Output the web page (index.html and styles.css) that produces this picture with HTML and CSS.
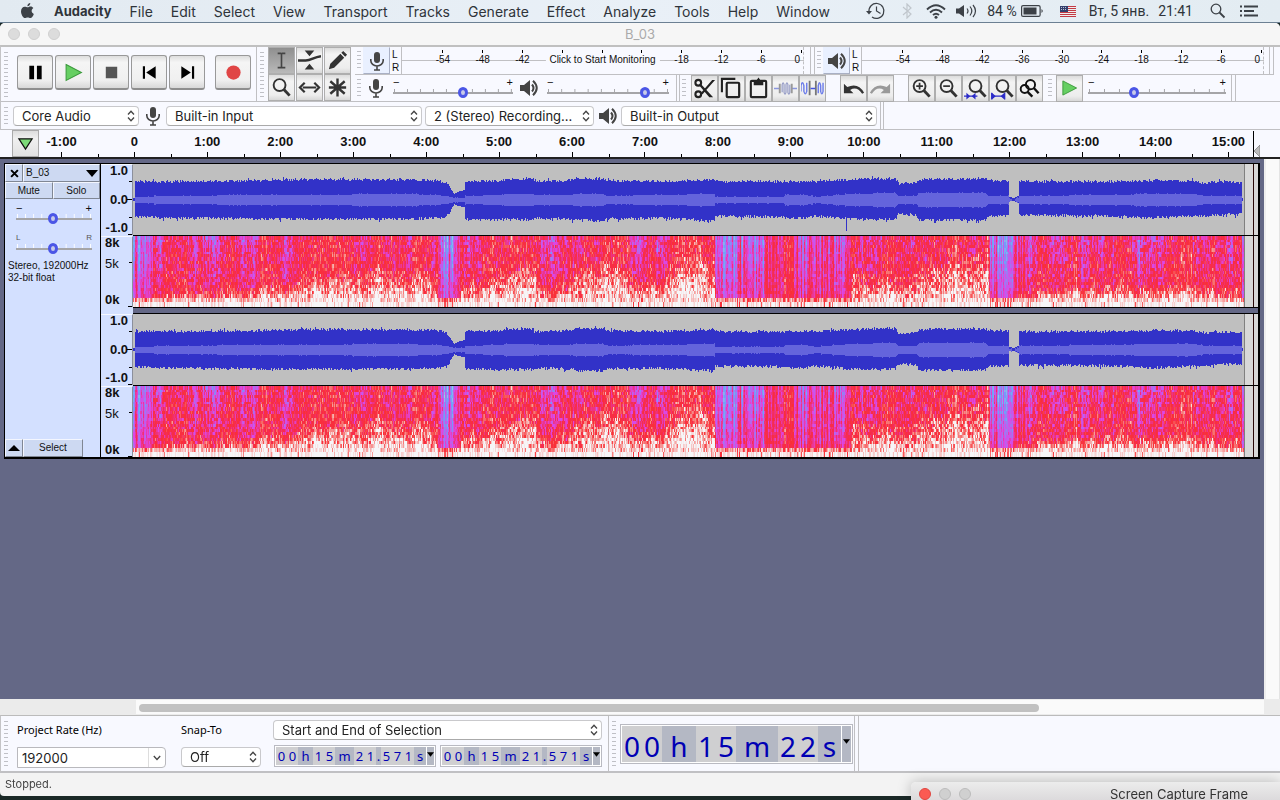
FILE: index.html
```html
<!DOCTYPE html>
<html lang="en">
<head>
<meta charset="utf-8">
<title>B_03</title>
<link rel="stylesheet" href="styles.css">
</head>
<body>
<svg class="defs" aria-hidden="true">
  <symbol id="mic" viewBox="0 0 16 20"><rect x="5" y="1" width="6" height="11" rx="3" fill="#444"/><path d="M1.800 8v1.500a6.200 5.500 0 0 0 12.400 0V8M8 15v4M5 19h6" fill="none" stroke="#444" stroke-width="1.600"/></symbol>
  <symbol id="speaker" viewBox="0 0 20 18"><path d="M1 6h4l6-5v16l-6-5H1z" fill="#444"/><path d="M13 5.500q3 3.500 0 7M14 1.800q7.500 7.200 0 14.400" fill="none" stroke="#444" stroke-width="2"/></symbol>
  <symbol id="updown" viewBox="0 0 8 12"><path d="M1 4.500 4 1.200 7 4.500M1 7.500 4 10.800 7 7.500" fill="none" stroke="#444" stroke-width="1.300"/></symbol>
  <symbol id="loupe" viewBox="0 0 24 24"><circle cx="10" cy="9.500" r="6.200" fill="none" stroke="#333" stroke-width="2"/><path d="m14.500 14 6 6.500" stroke="#333" stroke-width="3"/></symbol>
  <symbol id="play" viewBox="0 0 18 18"><path d="M2 1.500 16.500 9 2 16.500z" fill="#66cf62" stroke="#3b9a3c" stroke-width="1"/></symbol>
</svg>

<header class="menubar">
  <svg class="apple" viewBox="0 0 14 17"><path d="M10 0c.1 1.800-1.400 3.500-3.100 3.500C6.700 1.800 8.300.2 10 0zM7.200 4.500C8 4.500 9 3.600 10.400 3.700c1.200 0 2.300.7 2.900 1.600-2.700 1.700-2.200 5.200.5 6.300-.7 1.900-2.100 4.500-3.700 4.500-1.100 0-1.600-.7-2.900-.7s-1.900.7-2.900.7C2.300 16.100 0 12.100 0 9c0-3.300 2-5.200 4-5.200 1.300 0 2.400.7 3.200.7z" fill="#3c4147"/></svg>
  <nav>
    <a href="#" class="app">Audacity</a><a href="#">File</a><a href="#">Edit</a><a href="#">Select</a><a href="#">View</a><a href="#">Transport</a><a href="#">Tracks</a><a href="#">Generate</a><a href="#">Effect</a><a href="#">Analyze</a><a href="#">Tools</a><a href="#">Help</a><a href="#">Window</a>
  </nav>
  <div class="status-items">
    <svg width="20" height="18" viewBox="0 0 20 18"><path d="M3 10A7.500 7.500 0 1 1 6 15" fill="none" stroke="#3c4147" stroke-width="1.200"/><path d="M0 9h6l-3 3.500z" fill="#3c4147"/><path d="M10.500 4.500V9l4 2.500" fill="none" stroke="#3c4147" stroke-width="1.200"/></svg>
    <svg class="bt" width="10" height="16" viewBox="0 0 10 16"><path d="m1 4 8 7-4 4V1l4 4-8 7" fill="none" stroke="#c0c6cc" stroke-width="1.200"/></svg>
    <svg class="wifi" width="20" height="15" viewBox="0 0 20 15"><path d="M1 5.500q9-8.500 18 0M4 8.500q6-5.500 12 0M7 11q3-2.500 6 0" fill="none" stroke="#3c4147" stroke-width="1.900"/><circle cx="10" cy="13.300" r="1.500" fill="#3c4147"/></svg>
    <svg class="vol" width="21" height="14" viewBox="0 0 21 14"><path d="M0 4.500h3L8 1v12L3 9.500H0z" fill="#3c4147"/><path d="M11 4.500q2 2.500 0 5M14 2.500q3.600 4.500 0 9M17 1q5 6 0 12" fill="none" stroke="#3c4147" stroke-width="1.200"/></svg>
    <span>84 %</span>
    <svg class="batt" width="23" height="12" viewBox="0 0 23 12"><rect x=".6" y=".6" width="18.500" height="10.800" rx="1.500" fill="none" stroke="#3c4147" stroke-width="1.200"/><path d="M2.500 2.500h13v7h-13z" fill="#3c4147"/><path d="M20.500 4q2.500 2 0 4z" fill="#3c4147"/></svg>
    <svg class="flag" width="16" height="11" viewBox="0 0 16 11"><path d="M0 0h16v11H0z" fill="#eee"/><path d="M0 .5h16M0 2.500h16M0 4.500h16M0 6.500h16M0 8.500h16M0 10.500h16" stroke="#c33a45"/><path d="M0 0h8v6H0z" fill="#34406d"/><path d="M1 1.500h6M1 3.500h6" stroke="#b9c0d4" stroke-dasharray="1 1"/></svg>
    <span class="date">Вт, 5 янв.</span><span>21:41</span>
    <svg class="find" width="16" height="16" viewBox="0 0 16 16"><circle cx="6" cy="6" r="4.800" fill="none" stroke="#3c4147" stroke-width="1.300"/><path d="m9.500 9.500 5 5" stroke="#3c4147" stroke-width="1.800"/></svg>
    <svg class="list" width="18" height="12" viewBox="0 0 18 12"><path d="M0 1.500h2M4 1.500h14M0 6h2M4 6h10M0 10.500h2M4 10.500h14" stroke="#3c4147" stroke-width="1.800"/></svg>
  </div>
</header>

<main class="window">
  <div class="titlebar"><i></i><i></i><i></i><h1>B_03</h1></div>

  <section class="toolbars">
    <div class="bars-main">
      <div class="bar transport">
        <span class="grip"></span>
        <button class="big" aria-label="Pause"><svg viewBox="0 0 20 20"><path d="M3.500 3h5v14h-5zM11.500 3h5v14h-5z"/></svg></button>
        <button class="big" aria-label="Play"><svg viewBox="0 0 18 18"><use href="#play"/></svg></button>
        <button class="big" aria-label="Stop"><svg viewBox="0 0 20 20"><path d="M4 4h12v12H4z" fill="#555"/></svg></button>
        <button class="big" aria-label="Skip to start"><svg viewBox="0 0 20 20"><path d="M3 3.500h2.300v13H3zM16.500 3.500v13L6.500 10z"/></svg></button>
        <button class="big" aria-label="Skip to end"><svg viewBox="0 0 20 20"><path d="M14.700 3.500H17v13h-2.300zM3.500 3.500v13l10-6.500z"/></svg></button>
        <button class="big rec" aria-label="Record"><svg viewBox="0 0 20 20"><circle cx="10" cy="10" r="7.500" fill="#e04545"/></svg></button>
      </div>
      <div class="bar tools">
        <span class="grip"></span>
        <div class="toolgrid">
          <button class="sq on" aria-label="Selection"><svg viewBox="0 0 24 24"><path d="M8 4.500h3.200q.8 0 .8 1 0-1 .8-1H16M8 19.500h3.200q.8 0 .8-1 0 1 .8 1H16M12 5v14" fill="none" stroke="#444" stroke-width="1.700"/></svg></button>
          <button class="sq" aria-label="Envelope"><svg viewBox="0 0 24 24"><path d="M7 1.500h10l-5 6zM7 21.500h10l-5-6z" fill="#333"/><path d="M0 12h8c6 0 8-3.500 16-4.500" fill="none" stroke="#333" stroke-width="2.600"/></svg></button>
          <button class="sq" aria-label="Draw"><svg viewBox="0 0 24 24"><path d="m3 21 1.500-5.500L15 5l4 4L8.500 19.500zM16 4l2-2 4 4-2 2z" fill="#333"/></svg></button>
          <button class="sq" aria-label="Zoom"><svg viewBox="0 0 24 24"><use href="#loupe"/></svg></button>
          <button class="sq" aria-label="Time shift"><svg viewBox="0 0 24 24"><path d="M5 12h14M7 7l-5 5 5 5M17 7l5 5-5 5" fill="none" stroke="#333" stroke-width="2.300"/></svg></button>
          <button class="sq" aria-label="Multi-tool"><svg viewBox="0 0 24 24"><path d="M12 2.500v19M3 12h18M4.500 5.500l15 13M19.500 5.500l-15 13" stroke="#333" stroke-width="2.500"/></svg></button>
        </div>
      </div>
      <div class="stack">
        <div class="row">
          <div class="bar meterbar">
            <span class="grip"></span>
            <button class="sq device" aria-label="Record meter"><svg class="m" viewBox="0 0 16 20"><use href="#mic"/></svg></button>
            <span class="lr"><b>L</b><b>R</b></span>
            <div class="meter" data-meter><button class="monitor">Click to Start Monitoring</button></div>
          </div>
          <div class="bar meterbar">
            <span class="grip"></span>
            <button class="sq device" aria-label="Playback meter"><svg class="s" viewBox="0 0 20 18"><use href="#speaker"/></svg></button>
            <span class="lr"><b>L</b><b>R</b></span>
            <div class="meter" data-meter></div>
          </div>
          <span class="endcap"></span>
        </div>
        <div class="row">
          <div class="bar mixer">
            <span class="grip"></span>
            <svg class="m" viewBox="0 0 16 20"><use href="#mic"/></svg>
            <label class="slider rv"><span>−</span><span>+</span><input type="range" min="0" max="100" value="59" aria-label="Recording volume"></label>
            <svg class="s" viewBox="0 0 20 18"><use href="#speaker"/></svg>
            <label class="slider pv"><span>−</span><span>+</span><input type="range" min="0" max="100" value="83" aria-label="Playback volume"></label>
          </div>
          <div class="bar edit">
            <span class="grip"></span>
            <div class="group">
              <button class="sq" aria-label="Cut"><svg viewBox="0 0 24 24"><g fill="none" stroke="#222" stroke-width="2.200"><circle cx="5.500" cy="6" r="3"/><circle cx="5.500" cy="18" r="3"/></g><path d="m8 7 13 14h-4L7 9.500zM8 17 20 3h3L10 18z" fill="#222"/></svg></button>
              <button class="sq" aria-label="Copy"><svg viewBox="0 0 24 24"><path d="M2 16V2h14" fill="none" stroke="#222" stroke-width="2.200"/><rect x="7" y="6" width="13" height="15" rx="1" fill="none" stroke="#222" stroke-width="2.300"/></svg></button>
              <button class="sq" aria-label="Paste"><svg viewBox="0 0 24 24"><rect x="4" y="4" width="16" height="17" rx="1" fill="none" stroke="#222" stroke-width="2.200"/><path d="M7 3.500h3l2-3 2 3h3v5H7z" fill="#222"/></svg></button>
              <button class="sq" aria-label="Trim audio"><svg viewBox="0 0 24 24"><path d="M0 12h6M18 12h6" stroke="#8b96df" stroke-width="1.500"/><path d="M6 7v10M18.500 7v10" stroke="#999" stroke-width="2"/><path d="M8.500 16V8q1-4 2 0v8q1 4 2 0V8q1-4 2 0v8q1 4 2 0V8" fill="none" stroke="#9aa0c8" stroke-width="1.300"/></svg></button>
              <button class="sq" aria-label="Silence audio"><svg viewBox="0 0 24 24"><path d="M0 15V9q1.500-6 3 0v6q1.500 5 3 0V6M18 17V9q1.300-6 2.500 0v6q1.300 5 2.500 0V6" fill="none" stroke="#6e7eea" stroke-width="1.500"/><path d="M9 4v15M15.500 4v15" stroke="#777" stroke-width="1.900"/><path d="M10 12h5" stroke="#4453df" stroke-width="1.800"/></svg></button>
            </div>
            <div class="group">
              <button class="sq" aria-label="Undo"><svg viewBox="0 0 24 24"><path d="M2 7v10h10l-3.500-3.500q7-4.500 12.500 4l2-1q-6-11-17.500-6z" fill="#333"/></svg></button>
              <button class="sq" aria-label="Redo"><svg viewBox="0 0 24 24"><path d="M22 7v10H12l3.500-3.500q-7-4.500-12.500 4l-2-1q6-11 17.500-6z" fill="#999"/></svg></button>
            </div>
            <div class="group">
              <button class="sq" aria-label="Zoom in"><svg viewBox="0 0 24 24"><use href="#loupe"/><path d="M6.500 9.500h7M10 6v7" stroke="#333" stroke-width="1.800"/></svg></button>
              <button class="sq" aria-label="Zoom out"><svg viewBox="0 0 24 24"><use href="#loupe"/><path d="M6.500 9.500h7" stroke="#333" stroke-width="1.800"/></svg></button>
              <button class="sq" aria-label="Fit selection"><svg viewBox="0 0 24 24"><use href="#loupe" x="2"/><path d="M0 20h14" stroke="#2b2bc8" stroke-width="1.300"/><path d="m6.500 20-4-3.500v7zM8 20l4-3.500v7z" fill="#2b2bc8"/></svg></button>
              <button class="sq" aria-label="Fit project"><svg viewBox="0 0 24 24"><use href="#loupe" x="2"/><path d="M1 20h13M.7 16.500v7M14.300 16.500v7" stroke="#2b2bc8" stroke-width="1.300"/><path d="m5 20-4-3.500v7zM10 20l4-3.500v7z" fill="#2b2bc8"/></svg></button>
              <button class="sq" aria-label="Zoom toggle"><svg viewBox="0 0 24 24"><circle cx="7" cy="12.500" r="4.200" fill="none" stroke="#111" stroke-width="2"/><path d="m10 15.500 5 5" stroke="#111" stroke-width="2.500"/><circle cx="13" cy="8" r="4.800" fill="none" stroke="#111" stroke-width="2"/><path d="m16.500 11.500 5 5.500" stroke="#111" stroke-width="2.500"/></svg></button>
            </div>
          </div>
          <div class="bar speed">
            <span class="grip"></span>
            <button class="sq" aria-label="Play at speed"><svg class="pl" viewBox="0 0 18 18"><use href="#play"/></svg></button>
            <label class="slider sp"><span>−</span><span>+</span><input type="range" min="0" max="100" value="32" aria-label="Playback speed"></label>
          </div>
          <span class="endcap"></span>
        </div>
      </div>
    </div>
    <div class="devices">
      <span class="grip"></span>
      <span class="pick host"><select aria-label="Audio host"><option>Core Audio</option></select><svg><use href="#updown"/></svg></span>
      <svg class="m" viewBox="0 0 16 20"><use href="#mic"/></svg>
      <span class="pick wide"><select aria-label="Recording device"><option>Built-in Input</option></select><svg><use href="#updown"/></svg></span>
      <span class="pick chan"><select aria-label="Recording channels"><option>2 (Stereo) Recording...</option></select><svg><use href="#updown"/></svg></span>
      <svg class="s" viewBox="0 0 20 18"><use href="#speaker"/></svg>
      <span class="pick wide"><select aria-label="Playback device"><option>Built-in Output</option></select><svg><use href="#updown"/></svg></span>
      <span class="endcap"></span>
    </div>
  </section>

  <div class="timeline">
    <button class="pin" aria-label="Pin play head"><svg viewBox="0 0 18 14"><path d="M2 1.500h14L9 12.500z" fill="#7ddb78" stroke="#111" stroke-width="1.300"/></svg></button>
    <div class="scale" id="scale"></div>
    <span class="cursor"><svg viewBox="0 0 6 12"><path d="M6 0v12L0 6z" fill="#bbb" stroke="#777" stroke-width=".7"/></svg></span>
  </div>

  <div class="workspace">
    <div class="panel">
      <article class="track">
        <aside class="control">
          <div class="head"><button class="close" aria-label="Close track"><svg viewBox="0 0 8 8"><path d="m1 1 6 6M7 1 1 7" stroke="#000" stroke-width="1.800"/></svg></button><button class="name">B_03<svg viewBox="0 0 12 7"><path d="M0 0h12L6 7z"/></svg></button></div>
          <div class="pair"><button>Mute</button><button>Solo</button></div>
          <label class="slider tr"><span>−</span><span>+</span><input type="range" value="48" aria-label="Gain"></label>
          <label class="slider tr pan"><span>L</span><span>R</span><input type="range" value="48" aria-label="Pan"></label>
          <p>Stereo, 192000Hz<br>32-bit float</p>
          <div class="foot"><button class="fold" aria-label="Collapse"><svg viewBox="0 0 12 6"><path d="M0 6h12L6 0z"/></svg></button><button class="sel">Select</button></div>
        </aside>
        <div class="channels">
          <div class="channel">
            <div class="vr wv"><span>1.0</span><span>0.0</span><span>-1.0</span></div><div class="clip"><canvas data-kind="wave" data-seed="11"></canvas></div>
            <div class="vr sv"><span>8k</span><span class="mid">5k</span><span>0k</span></div><div class="clip"><canvas data-kind="spec" data-seed="7"></canvas></div>
          </div>
          <div class="divider"></div>
          <div class="channel">
            <div class="vr wv"><span>1.0</span><span>0.0</span><span>-1.0</span></div><div class="clip"><canvas data-kind="wave" data-seed="29"></canvas></div>
            <div class="vr sv"><span>8k</span><span class="mid">5k</span><span>0k</span></div><div class="clip"><canvas data-kind="spec" data-seed="7"></canvas></div>
          </div>
        </div>
      </article>
    </div>
    <div class="vscroll"></div>
  </div>
  <div class="hscroll"><div class="lane"><div class="thumb"></div></div></div>

  <section class="selection">
    <span class="grip"></span>
    <div class="field rate"><label for="rate">Project Rate (Hz)</label><span class="combo"><input id="rate" value="192000"><button aria-label="Show rates"><svg viewBox="0 0 8 6"><path d="m.8 1 3.200 3.500L7.200 1" fill="none" stroke="#444" stroke-width="1.300"/></svg></button></span></div>
    <div class="field snap"><label for="snap">Snap-To</label><span class="pick"><select id="snap"><option>Off</option></select><svg><use href="#updown"/></svg></span></div>
    <div class="field range">
      <span class="pick"><select aria-label="Selection mode"><option>Start and End of Selection</option></select><svg><use href="#updown"/></svg></span>
      <div class="times"><div class="time" data-time="00|h|15|m|21|.|571|s"></div><div class="time" data-time="00|h|15|m|21|.|571|s"></div></div>
    </div>
    <div class="bigtime"><span class="grip"></span><div class="time large" data-time="00|h|15|m|22|s"></div></div>
    <span class="endcap"></span>
  </section>
  <footer>Stopped.</footer>
</main>
<aside class="capture"><i class="red"></i><i></i><i></i><h2>Screen Capture Frame</h2></aside>
<script src="script.js"></script>
</body>
</html>
```
FILE: styles.css
```css
* { box-sizing: border-box; }
body { margin: 0; height: 100vh; overflow: hidden; display: flex; flex-direction: column; background: #1b2927; position: relative; font-family: Inter, sans-serif; color: #111; }
button { padding: 0; margin: 0; border: 0; font: inherit; color: inherit; background: none; }
svg { display: block; flex: none; }
.defs { position: absolute; width: 0; height: 0; }

/* System menu bar */
.menubar { height: 23px; flex: none; display: flex; align-items: center; padding: 0 22px 0 21px; background: linear-gradient(90deg, #e2eaf1, #e9f0f7 50%, #e3ecf2); border-bottom: 1px solid #6c8093; font-size: 14px; color: #2f343a; }
.apple { width: 13px; height: 16px; margin-right: 20px; }
nav { display: flex; gap: 18px; font-family: Inter, sans-serif; }
nav a { color: inherit; text-decoration: none; }
nav .app { font-weight: 700; font-size: 13px; line-height: 17px; }
.status-items { margin-left: auto; display: flex; align-items: center; font-family: Roboto, sans-serif; white-space: nowrap; }
.bt { margin-left: 16px; }
.wifi { margin-left: 14px; }
.vol { margin: 0 10px; }
.batt { margin: 0 16px 0 4px; }
.date { margin: 0 9px 0 13px; }
.find { margin: 0 14px 0 17px; }

/* Window frame */
.window { flex: 1; min-height: 0; margin-bottom: 4px; display: flex; flex-direction: column; background: #f3f3f3; border-radius: 5px 5px 0 4px; overflow: hidden; }
.titlebar { height: 22px; flex: none; display: flex; align-items: center; gap: 8px; padding-left: 8px; position: relative; background: #f6f6f6; }
.titlebar i { width: 12px; height: 12px; border-radius: 50%; background: #dcdcdc; border: 1px solid #cfcfcf; }
.titlebar h1 { position: absolute; left: 0; right: 0; margin: 0; text-align: center; font-size: 13px; font-weight: 400; color: #aaa; }

/* Toolbars */
.toolbars { flex: none; background: #f8f9ff; border-top: 2px solid #c0c0c0; border-left: 1px solid #c4c4c6; }
.bars-main { display: flex; height: 55px; border-bottom: 1px solid #c0c0c3; }
.bar { display: flex; align-items: center; }
.grip { flex: none; width: 4px; align-self: stretch; margin: 5px 5px 3px 3px; background: repeating-linear-gradient(#bfc0c6 0 1px, transparent 1px 4px); }
.transport { width: 256px; border-right: 1px solid #c0c0c3; }
.transport .grip { margin-right: 9px; }
.big { width: 36px; height: 35px; margin-right: 2px; margin-top: -3px; border-radius: 3px; border: 1px solid #999; border-bottom: 2px solid #8e8e8e; background: linear-gradient(#dedede, #f5f5f5 20%, #f0f0f0 75%, #d8d8d8); display: grid; place-items: center; }
.big svg { width: 19px; height: 19px; }
.rec { margin-left: 8px; }
.tools { width: 98px; }
.toolgrid { display: grid; grid-template-columns: repeat(3, 28px); grid-template-rows: repeat(2, 27px); align-self: flex-start; margin-left: -1px; }
.sq { width: 27px; height: 27px; flex: none; border: 1px solid #aeaeae; background: linear-gradient(#dcdcdc, #f4f4f4 25%, #ededed 80%, #d8d8d8); display: grid; place-items: center; }
.sq svg { width: 23px; height: 23px; }
.sq.on { background: linear-gradient(#8f8f8f, #b9b9b9); }
.m, .sq .m { width: 16px; height: 20px; }
.s, .sq .s { width: 20px; height: 18px; }
.stack { flex: 1; min-width: 0; padding-right: 6px; }
.row { display: flex; height: 27px; }
.row + .row { border-top: 1px solid #c0c0c3; }
.row .grip { margin: 4px 2px 3px 2px; }
.meterbar { flex: 1; min-width: 0; padding-right: 6px; border-right: 1px solid #c0c0c3; }
.meterbar + .meterbar { border-left: 1px solid #c0c0c3; margin-left: 3px; padding-right: 5px; }
.endcap { width: 4px; flex: none; border-right: 1px solid #c0c0c3; }
.device { background: #e9f0ff; border-color: #e9f0ff #a9b0c4 #a9b0c4 #e9f0ff; }
.lr { width: 11px; padding-left: 2px; display: grid; font: 10px/13px "Liberation Sans", sans-serif; }
.lr b { font-weight: 400; }
.meter { flex: 1; min-width: 0; height: 27px; position: relative; display: flex; padding-left: 21px; border-left: 1px solid #c0c0c3; border-right: 1px dashed #c0c0c3; background: linear-gradient(transparent 13px, #c0c0c3 13px 14px, transparent 14px); font: 10px/12px "Liberation Sans", sans-serif; }
.meter span { flex: 1; min-width: 0; text-align: center; padding-top: 7px; background: linear-gradient(#000, #000) 50% 3px / 1px 3px no-repeat; }
.meter span:last-of-type { flex: 0 0 22px; text-align: right; padding-right: 3px; background-position: 20px 3px; }
.monitor { position: absolute; left: 50%; top: 6px; transform: translateX(-50%); background: #f8f9ff; padding: 0 4px; white-space: nowrap; line-height: 14px; }

.mixer { width: 322px; border-right: 1px solid #c0c0c3; }
.mixer .m { margin: 0 9px 0 5px; }
.mixer .s { margin: 0 8px 0 6px; }
.edit { width: 367px; margin-left: 2px; border-left: 1px solid #c0c0c3; }
.edit .grip { margin-right: 5px; }
.group { display: flex; margin-right: 14px; }
.group:last-child { margin-right: 0; }
.speed { width: 186px; border-right: 1px solid #c0c0c3; }
.speed .sq { margin: 0 5px 0 2px; }
.sq .pl { width: 17px; height: 18px; }

.slider { display: flex; flex-wrap: wrap; justify-content: space-between; flex: none; font: 11px/8px "Liberation Sans", sans-serif; }
.slider input { appearance: none; width: 100%; height: 12px; margin: 0; background: linear-gradient(#a5a5a8, #a5a5a8) 0 6px / 100% 2px no-repeat, linear-gradient(90deg, #a5a5a8 1px, transparent 1px) 1px 3px / calc((100% - 3px) / 9) 3px repeat-x; }
.slider input::-webkit-slider-thumb { appearance: none; width: 10px; height: 11px; border-radius: 50%; border: 3px solid #4b56e6; background: #c7cae8; }
.rv { width: 120px; }
.pv { width: 122px; }
.sp { width: 138px; }

.devices { height: 28px; display: flex; align-items: center; border-bottom: 1px solid #c0c0c3; }
.devices > .endcap { align-self: stretch; border-left: 1px solid #c0c0c3; margin-left: 3px; }
.devices .grip { margin-right: 5px; }
.devices .m { margin: 0 5px 0 6px; }
.devices .s { margin: 0 3px 0 4px; }
.pick { position: relative; display: block; flex: none; height: 20px; }
.pick select { appearance: none; display: block; width: 100%; height: 20px; border: 1px solid #c9c9cc; border-bottom-color: #aaa; border-radius: 4px; background: #fff; padding: 0 20px 0 8px; font: 13px/18px Inter, sans-serif; color: #222; }
.pick > svg { position: absolute; right: 4px; top: 4px; width: 8px; height: 12px; pointer-events: none; }
.host { width: 126px; }
.wide { width: 256px; }
.chan { width: 169px; margin-left: 3px; }

/* Timeline */
.timeline { flex: none; height: 29px; position: relative; background: #f8f9ff; border-bottom: 2px solid #222; padding: 0 15px 0 25px; }
.pin { position: absolute; left: 12px; top: 0; width: 27px; height: 27px; border: 1px solid #aaa; background: linear-gradient(#ddd, #f0f0f0 30%, #e2e2e2); display: grid; place-items: center; }
.pin svg { width: 17px; height: 14px; }
.scale { display: flex; height: 27px; }
.scale span { flex: 1; min-width: 0; text-align: center; font: bold 13px/24px "Liberation Sans", sans-serif; background: linear-gradient(#000, #000) 50% 100% / 1px 5px no-repeat, linear-gradient(#000, #000) 0 100% / 1px 3px no-repeat; }
.cursor { position: absolute; right: 20px; top: 1px; bottom: 0; width: 7px; border-left: 1px solid #000; background: #f8f9ff; }
.cursor svg { width: 6px; height: 12px; margin-top: 14px; }

/* Tracks */
.workspace { flex: 1; min-height: 0; display: flex; }
.panel { flex: 1; min-width: 0; background: #646886; padding: 4px 4px 0; }
.vscroll { width: 16px; background: #fafafa; border-left: 2px solid #eee; border-right: 1px solid #e4e4e4; }
.track { display: flex; border: 1px solid #000; border-right-width: 2px; border-bottom-width: 2px; background: #d3e0ff; }
.control { width: 96px; flex: none; display: flex; flex-direction: column; border-right: 1px solid #000; font: 10px/12px "Liberation Sans", sans-serif; }
.head, .pair { display: flex; flex: none; height: 18px; }
.control button { background: #cdd9f2; border: 1px solid #f3f6ff; border-right-color: #808794; border-bottom-color: #808794; }
.head .close { width: 18px; display: grid; place-items: center; }
.close svg { width: 9px; height: 9px; }
.head .name { flex: 1; display: flex; justify-content: space-between; align-items: center; padding: 0 1px 0 2px; }
.name svg { width: 12px; height: 7px; }
.pair { height: 17px; }
.pair button { flex: 1; }
.tr { width: 76px; margin: 5px 0 0 11px; height: 22px; flex: none; align-content: flex-start; }
.tr.pan { margin-top: 8px; }
.pan span { font-size: 8px; color: #555; }
.slider.tr input { background: linear-gradient(#a5a5a8, #a5a5a8) 0 6px / 100% 2px no-repeat, linear-gradient(90deg, #fff 1px, transparent 1px) 1px 2px / calc((100% - 3px) / 9) 4px repeat-x; }
.control p { margin: 4px 0 0 3px; }
.foot { display: flex; margin-top: auto; height: 18px; }
.fold { width: 18px; display: grid; place-items: center; }
.fold svg { width: 12px; height: 6px; }
.sel { width: 60px; }
.channels { flex: 1; min-width: 0; }
.channel { display: grid; grid-template-columns: 32px 1fr; grid-template-rows: 71px 71px; row-gap: 1px; background: linear-gradient(#000, #000) 32px 71px / 100% 1px no-repeat; }
.divider { height: 7px; margin-left: 32px; background: #646886; border-top: 1px solid #000; border-bottom: 1px solid #000; }
.vr { display: flex; flex-direction: column; justify-content: space-between; border-right: 1px solid #8b8f9c; border-top: 1px solid #f5f8ff; padding-bottom: 2px; font: bold 13px/11px "Liberation Sans", sans-serif; background-repeat: no-repeat; }
.wv { align-items: flex-end; padding-right: 4px; background-image: linear-gradient(#000, #000), linear-gradient(#000, #000), linear-gradient(#000, #000), linear-gradient(#000, #000); background-size: 3px 1px, 5px 1px, 3px 1px, 4px 1px; background-position: 100% 16px, 100% 34px, 100% 52px, 100% 69px; }
.sv { padding-left: 4px; background-image: linear-gradient(#000, #000), linear-gradient(#000, #000); background-size: 3px 1px, 4px 1px; background-position: 100% 25px, 100% 69px; }
.sv .mid { font-weight: 400; margin-bottom: 15px; }
.clip { min-width: 0; padding-right: 14px; background: linear-gradient(270deg, #d8d8d8 4px, #280808 4px 5px, #d8d8d8 5px 13px, #808080 13px 14px, transparent 14px); }
.clip canvas { display: block; width: 100%; height: 71px; image-rendering: pixelated; }
.hscroll { flex: none; height: 16px; padding: 1px 16px 0 136px; background: #ebebeb; }
.lane { height: 14px; background: #fafafa; padding: 4px 0 0 3px; }
.thumb { width: 80%; height: 8px; border-radius: 4px; background: #c1c1c1; }

/* Selection bar */
.selection { flex: none; height: 58px; display: flex; background: #f8f9ff; border-top: 1px solid #bbb; border-bottom: 2px solid #c0c0c3; border-left: 1px solid #c4c4c6; }
.selection > .grip { margin: 5px 9px 5px 3px; }
.field { flex: none; display: flex; flex-direction: column; gap: 7px; padding-top: 4px; }
.field > label { font: 11px/20px "Noto Sans", sans-serif; color: #000; }
.rate { width: 164px; }
.combo { display: flex; width: 149px; height: 21px; border: 1px solid #b9b9bd; border-radius: 0 4px 4px 0; background: #fff; }
.combo input { flex: 1; min-width: 0; border: 0; padding: 0 4px; background: none; font: 13px/18px Inter, sans-serif; color: #222; }
.combo button { width: 17px; border-left: 1px solid #ddd; display: grid; place-items: center; }
.combo svg { width: 8px; height: 6px; }
.snap { width: 92px; }
.snap .pick { width: 80px; }
.range { gap: 5px; width: 329px; }
.times { display: flex; gap: 4px; margin-left: 1px; }
.time { display: flex; width: 162px; height: 22px; border: 1px solid #b9bac2; padding: 1px; background: #fff; font: 13px/18px "Noto Sans", sans-serif; color: #0000b4; }
.time span { display: flex; background: #b4b8c4; justify-content: center; }
.time span.d { background: #cfcfd1; }
.time b { width: 11px; text-align: center; font-weight: 400; }
.time button { flex: 1; border-left: 1px solid #fff; background: #b4b8c4; }
.time button svg { width: 7px; height: 5px; margin: -4px auto 0; }
.bigtime { display: flex; align-items: center; width: 247px; border-left: 1px solid #c0c0c3; border-right: 1px solid #c0c0c3; margin-left: 6px; }
.large { width: 233px; height: 40px; font: 28px/40px "Noto Sans", sans-serif; }
.large b { width: 20px; }
.bigtime .grip { margin: 5px 4px 5px 3px; }
footer { flex: none; height: 23px; padding-left: 5px; font-size: 11px; line-height: 23px; color: #444; }
.capture { position: absolute; left: 911px; right: 0; bottom: 0; height: 18px; display: flex; align-items: center; gap: 8px; padding: 6px 8px 0; border-radius: 5px 0 0 0; background: linear-gradient(#ececec, #dcdadc); box-shadow: 0 0 14px rgba(0,0,0,.25); overflow: visible; }
.capture i { flex: none; width: 12px; height: 12px; border-radius: 50%; background: #d0d0d0; border: 1px solid #bcbcbc; }
.capture .red { background: #fb5a52; border-color: #e04540; }
.capture h2 { margin: 0 0 0 131px; font-size: 13px; line-height: 14px; font-weight: 400; color: #333; white-space: nowrap; }
```
FILE: script.js
```js
// Timeline labels
const scale = document.getElementById('scale');
for (let i = -1; i <= 15; i++) {
  const s = document.createElement('span');
  s.textContent = i === 0 ? '0' : i + ':00';
  scale.append(s);
}

// Meter scales, in dB
document.querySelectorAll('[data-meter]').forEach(m => {
  const quiet = m.querySelector('.monitor');
  for (let db = -54; db <= 0; db += 6) {
    const s = document.createElement('span');
    const covered = quiet && db >= -36 && db <= -24;
    s.textContent = covered ? '' : db;
    m.append(s);
  }
});

// Time counters: digit groups alternate with unit letters
const unitWidths = { small: { h: 15, m: 19, '.': 5, s: 12 }, large: { h: 34, m: 42, s: 23 } };
document.querySelectorAll('[data-time]').forEach(t => {
  const w = t.classList.contains('large') ? unitWidths.large : unitWidths.small;
  t.dataset.time.split('|').forEach(part => {
    const s = document.createElement('span');
    if (/\d/.test(part)) {
      s.className = 'd';
      [...part].forEach(c => { const b = document.createElement('b'); b.textContent = c; s.append(b); });
    } else {
      s.textContent = part;
      s.style.width = w[part] + 'px';
    }
    t.append(s);
  });
  t.insertAdjacentHTML('beforeend', '<button aria-label="Format"><svg viewBox="0 0 8 5"><path d="M0 0h8L4 5z"/></svg></button>');
});

function rng(seed) {
  return () => {
    seed = (seed + 0x6D2B79F5) | 0;
    let t = Math.imul(seed ^ (seed >>> 15), 1 | seed);
    t = (t + Math.imul(t ^ (t >>> 7), 61 | t)) ^ t;
    return ((t ^ (t >>> 14)) >>> 0) / 4294967296;
  };
}
function at(keys, x) {
  let i = 1;
  while (i < keys.length - 1 && keys[i][0] < x) i++;
  const a = keys[i - 1], b = keys[i];
  const f = Math.max(0, Math.min(1, (x - a[0]) / (b[0] - a[0])));
  return a.map((v, k) => v + (b[k] - v) * f);
}

// position, peak above, peak below, rms
const envelope = [[0,1,1,0],[1,1,1,0],[2,17,16,3],[40,17,17,4],[127,18,18,5],[170,19,18,5],[267,19,18,6],[302,18,17,5],[313,16,16,4],[321,5,4,2],[324,7,6,2],[331,9,7,2],[332,17,18,4],[367,18,19,5],[374,19,18,6],[400,20,19,6],[401,17,17,5],[437,18,18,5],[442,20,19,6],[470,20,20,6],[473,18,18,4],[527,17,17,5],[581,19,20,6],[582,17,15,3],[650,17,16,3],[652,17,17,5],[672,17,17,5],[682,17,15,3],[717,19,18,6],[762,20,18,7],[765,15,13,4],[783,16,14,4],[786,19,19,7],[852,20,19,7],[855,18,15,4],[875,18,15,4],[876,2,1,1],[880,1,1,0],[885,3,3,2],[886,17,14,4],[985,17,15,5],[1017,18,17,6],[1060,18,15,6],[1072,15,15,4],[1082,17,14,4],[1108,16,13,4],[1109,1,1,0],[1111,1,1,0]];
// position, level at the top of the band, height of the bright part
const bands = [[0,.36,8],[15,.4,8],[20,.5,14],[120,.56,22],[167,.6,30],[237,.62,40],[301,.62,36],[304,.46,12],[320,.28,8],[324,.3,8],[328,.56,26],[370,.62,34],[402,.66,48],[404,.54,24],[439,.6,28],[443,.67,50],[490,.67,45],[507,.55,28],[527,.55,28],[535,.66,48],[581,.68,54],[583,.28,7],[620,.34,8],[647,.46,10],[690,.4,9],[717,.46,9],[720,.64,42],[762,.6,28],[790,.66,42],[854,.68,58],[857,.36,10],[877,.2,6],[882,.38,15],[897,.52,20],[967,.55,24],[1040,.57,24],[1107,.54,20],[1109,.15,5],[1111,.15,5]];
const palette = [[0,160,205,225],[.2,112,160,250],[.42,222,70,230],[.6,246,44,86],[.72,250,48,54],[.86,246,150,148],[1,246,246,248]];

function drawWave(ctx, w, h, rand) {
  ctx.fillStyle = '#bfbfbf';
  ctx.fillRect(0, 0, w, h);
  const mid = 35;
  for (let x = 0; x < w - 1; x++) {
    const [, up, down, rms] = at(envelope, x);
    const rough = up > 10 ? 1 : 0;
    const u = Math.round(up + rough * (rand() * 2.6 - .8 + (rand() > .96 ? 1.5 : 0)));
    const d = Math.round(down + rough * (rand() * 3 - .5 + (rand() > .96 ? 2 : 0)));
    ctx.fillStyle = '#3232c8';
    ctx.fillRect(x, mid - u, 1, u + d + 1);
    if (rms > 0) {
      const r = Math.round(rms + (rand() > .9 ? 1 : 0));
      ctx.fillStyle = '#6464dc';
      ctx.fillRect(x, mid - r + 1, 1, 2 * r);
    }
  }
}
function drawSpectrum(ctx, w, h, rand) {
  const rowTops = [0, 4, 6, 9, 12, 16, 18, 21, 25, 28, 32, 35, 38, 41, 43, 46, 49, 52, 55, 58, 62, 66, 71];
  const rows = rowTops.length - 1;
  const grain = new Array(rows).fill(0);
  let slow = 0, quick = 0;
  for (let x = 0; x < w; x++) {
    const [, top, bright] = at(bands, x);
    slow = slow * .9 + (rand() - .5) * .1;
    quick = quick * .45 + (rand() - .5) * .3;
    const cold = top < .5;
    const column = slow * (top > .6 ? .5 : 1) + quick * (cold ? 1.2 : .7);
    let v = 0, wobble = 0;
    for (let i = 0; i < rows; i++) {
      const y = rowTops[i], t = y / h, fromBase = h - y;
      grain[i] = grain[i] * .4 + (rand() - .5) * .26;
      wobble = wobble * .6 + (rand() - .5) * .08;
      const mid = Math.max(.66, top);
      v = top + (mid - top) * t * (cold ? .55 : 1.2) + column * (1 - t * .5) + grain[i] * (cold ? .5 : 1) + wobble;
      if (fromBase < bright) v += .26 * Math.min(1, (1 - fromBase / bright) * 1.5) + (rand() - .4) * .2;
      if (i === rows - 2) v = Math.max(v, .68 + rand() * .3);
      if (i === rows - 1) v = Math.max(v, (rand() > .15 ? .92 : .7) + rand() * .1);
      const c = at(palette, Math.max(0, Math.min(1, v)));
      ctx.fillStyle = `rgb(${c[1] | 0},${c[2] | 0},${c[3] | 0})`;
      ctx.fillRect(x, y, 1, rowTops[i + 1] - y);
    }
  }
}
document.querySelectorAll('canvas').forEach(c => {
  c.width = 1111;
  c.height = 71;
  const ctx = c.getContext('2d');
  const rand = rng(+c.dataset.seed);
  (c.dataset.kind === 'wave' ? drawWave : drawSpectrum)(ctx, c.width, c.height, rand);
  if (c.dataset.seed === '11') {
    ctx.fillStyle = '#3232c8';
    ctx.fillRect(713, 50, 1, 17);
  }
});
```
